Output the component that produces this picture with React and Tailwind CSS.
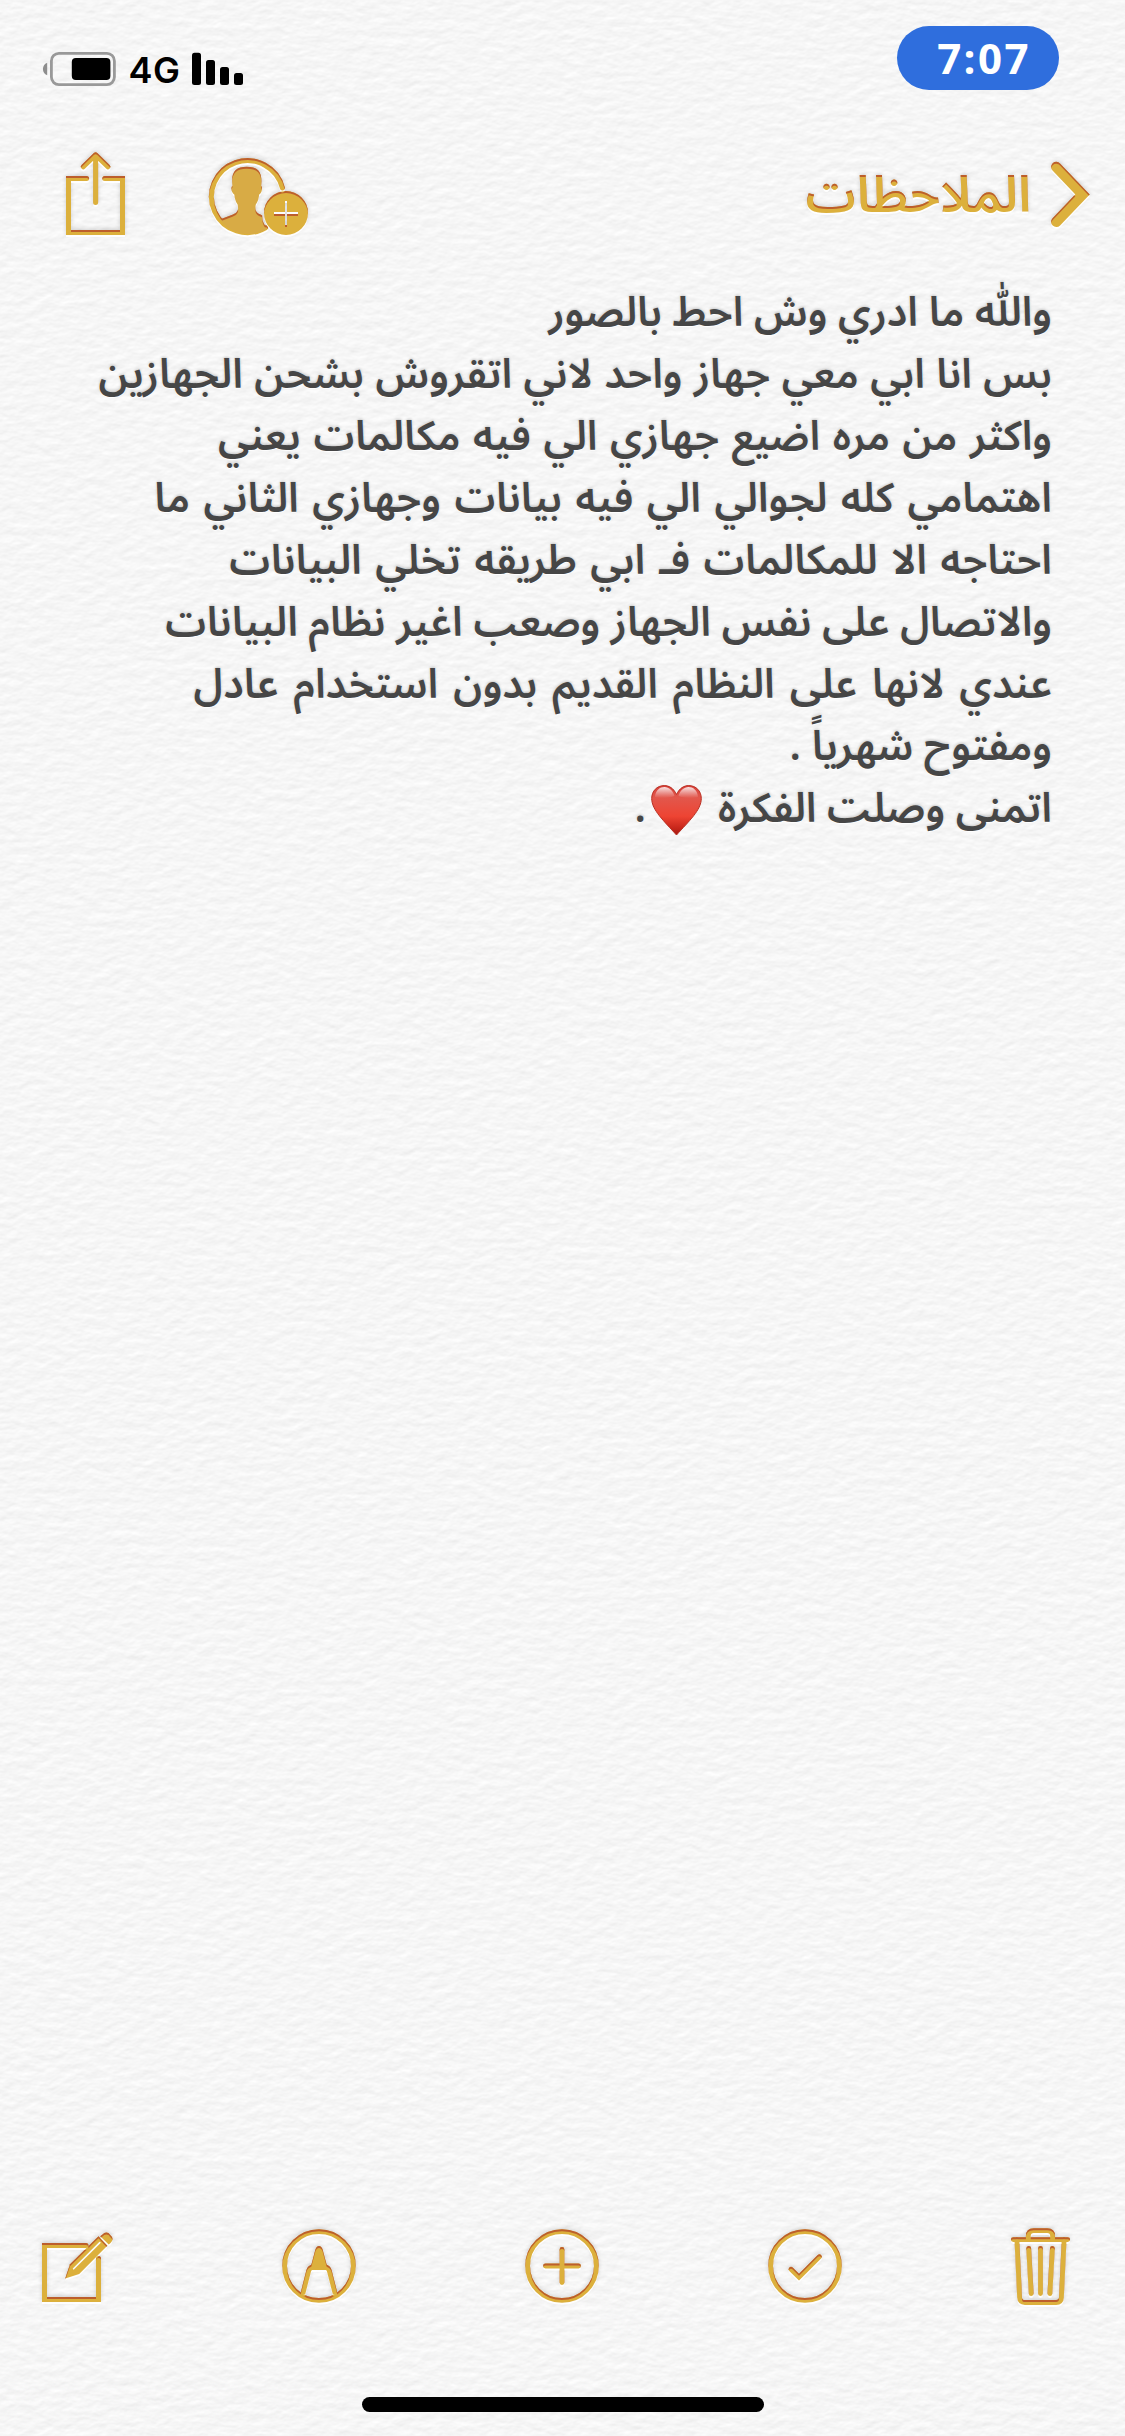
const NOTE_LINES = [
  { text: "واللّٰه ما ادري وش احط بالصور", spacing: "" },
  { text: "بس انا ابي معي جهاز واحد لاني اتقروش بشحن الجهازين", spacing: "[word-spacing:0.8px]" },
  { text: "واكثر من مره اضيع جهازي الي فيه مكالمات يعني", spacing: "[word-spacing:1.9px]" },
  { text: "اهتمامي كله لجوالي الي فيه بيانات وجهازي الثاني ما", spacing: "[word-spacing:2.9px]" },
  { text: "احتاجه الا للمكالمات فـ ابي طريقه تخلي البيانات", spacing: "[word-spacing:2.9px]" },
  { text: "والاتصال على نفس الجهاز وصعب اغير نظام البيانات", spacing: "[word-spacing:0.1px]" },
  { text: "عندي لانها على النظام القديم بدون استخدام عادل", spacing: "[word-spacing:4.3px]" },
  { text: "ومفتوح شهرياً .", spacing: "" },
];

function Filters() {
  return (
    <svg className="absolute h-0 w-0" aria-hidden="true">
      <defs>
        <filter id="emboss" x="-10%" y="-10%" width="120%" height="120%" colorInterpolationFilters="sRGB">
          <feOffset in="SourceAlpha" dy="1.6" result="down" />
          <feComposite in="SourceAlpha" in2="down" operator="out" result="edge" />
          <feFlood floodColor="#b9562a" floodOpacity="0.9" />
          <feComposite in2="edge" operator="in" result="inner" />
          <feGaussianBlur in="SourceAlpha" stdDeviation="2" result="soft" />
          <feOffset in="soft" dy="-1" result="softUp" />
          <feFlood floodColor="#000" floodOpacity="0.16" />
          <feComposite in2="softUp" operator="in" result="shade" />
          <feFlood floodColor="#fff" floodOpacity="0.9" />
          <feComposite in2="down" operator="in" result="light" />
          <feMerge>
            <feMergeNode in="shade" />
            <feMergeNode in="light" />
            <feMergeNode in="SourceGraphic" />
            <feMergeNode in="inner" />
          </feMerge>
        </filter>
      </defs>
    </svg>
  );
}

function Paper() {
  return (
    <svg className="absolute inset-0 h-full w-full" aria-hidden="true">
      <filter id="paper" x="0" y="0" width="100%" height="100%" colorInterpolationFilters="sRGB">
        <feTurbulence type="fractalNoise" baseFrequency="0.07 0.12" numOctaves="3" seed="8" />
        <feDiffuseLighting surfaceScale="0.22" diffuseConstant="1.11" lightingColor="#fbfbfb">
          <feDistantLight azimuth="75" elevation="62" />
        </feDiffuseLighting>
      </filter>
      <rect width="100%" height="100%" filter="url(#paper)" />
    </svg>
  );
}

function StatusBar() {
  return (
    <div dir="ltr" className="flex h-[116px] items-start justify-between pr-[66px] pl-[42px]">
      <div className="flex h-[137px] items-center">
        <svg width="76" height="36" viewBox="42 51 76 36" aria-label="Battery">
          <path d="M47.2 62.7C41.5 65 41.5 73 47.2 75.3Z" fill="#8e8e8e" />
          <rect x="51.4" y="53.4" width="63" height="31.2" rx="7.5" fill="none" stroke="#999" strokeWidth="2.8" />
          <rect x="71.8" y="58" width="38.6" height="22" rx="4" fill="#000" />
        </svg>
        <span className="ml-[10.5px] pt-0.5 font-['Inter'] text-[36px] leading-none font-semibold tracking-[0.4px] text-black">4G</span>
        <svg className="ml-[12px]" width="52" height="36" viewBox="192 51 52 36" aria-label="Signal">
          <rect x="192" y="52.7" width="9" height="32.3" rx="2.5" />
          <rect x="206" y="60" width="9" height="25" rx="2.5" />
          <rect x="220" y="67" width="9" height="18" rx="2.5" />
          <rect x="234" y="73" width="9" height="12" rx="2.5" />
        </svg>
      </div>
      <div className="mt-[26px] flex h-16 w-[162px] items-center justify-center rounded-full bg-[#2f6edd] pl-[12px] font-['Open_Sans'] text-[42px] leading-none font-bold tracking-[2.4px] text-white">
        7:07
      </div>
    </div>
  );
}

const GOLD = "#dcb03c";

function ShareIcon() {
  return (
    <svg className="[filter:url(#emboss)]" width="70" height="92" viewBox="61 148 70 92" fill="none" stroke={GOLD} strokeWidth="5" strokeLinecap="round" strokeLinejoin="round" aria-label="Share">
      <path d="M86.6 178.6H68.5V232.5H122.5V178.6H104.8" strokeLinejoin="miter" />
      <path d="M95.6 202.5V156.5M83.3 166.8L95.6 154.9L107.9 166.8" />
    </svg>
  );
}

function AddPersonIcon() {
  return (
    <svg className="[filter:url(#emboss)]" width="108" height="92" viewBox="205 148 108 92" aria-label="Add people">
      <path d="M282.4 188A36 36 0 1 0 265.5 227.8" fill="none" stroke={GOLD} strokeWidth="5" strokeLinecap="round" />
      <path d="M220.5 219.3L233 214.6C238.5 212.2 238.6 209 237.6 204.5C235.5 201.5 234.7 198 234.3 194.5C231.4 192.8 230.7 187.5 232.4 185.8C230.8 172 235.5 166.8 246.7 166.8C258 166.8 262.7 172 261.2 185.8C262.8 187.5 262 192.8 259.2 194.5C258.8 198 258 201.5 255.8 204.5C254.9 209 255 212.2 260.5 214.6L262.2 215.4C262 221 264 225 267.4 228.4C255 237.5 231 236.5 220.5 219.3Z" fill="#d8ab45" />
      <path fillRule="evenodd" clipRule="evenodd" d="M286 191A22 22 0 1 1 286 235A22 22 0 1 1 286 191ZM285 201V212H274V214H285V225H287V214H298V212H287V201Z" fill={GOLD} />
    </svg>
  );
}

function BackChevron() {
  return (
    <svg className="[filter:url(#emboss)]" width="46" height="72" viewBox="1048 160 46 72" fill="none" stroke={GOLD} strokeWidth="10.4" strokeLinecap="round" strokeLinejoin="miter" aria-label="Back">
      <path d="M1056.3 168L1082.5 195.4L1056.3 222.8" />
    </svg>
  );
}

function Toolbar() {
  const cls = "[filter:url(#emboss)]";
  return (
    <div dir="ltr" className="flex h-[84px] items-center justify-between pr-[51px] pl-[38px]">
      <svg className={cls} width="80" height="84" viewBox="38 2224 80 84" fill="none" stroke={GOLD} strokeWidth="5" strokeLinecap="round" strokeLinejoin="miter" aria-label="Compose">
        <path d="M86 2245.5H44.5V2299.5H98.5V2258.5" />
        <path d="M65.2 2278.4L70 2264.3L98.5 2236.3L107.3 2245.8L79.2 2273.9Z" fill={GOLD} stroke="none" />
        <path d="M102.5 2234.5Q105 2231.5 108.5 2233L112 2237Q113.5 2240 110.5 2243L108.7 2244.5L100.2 2236.2Z" fill={GOLD} stroke="none" />
        <path d="M73.6 2268.8L99.8 2242.6" stroke="#fafafa" strokeWidth="1.6" />
      </svg>
      <svg className={cls} width="84" height="84" viewBox="277 2224 84 84" fill="none" stroke={GOLD} strokeWidth="4.8" aria-label="Markup">
        <circle cx="319" cy="2266" r="34.4" />
        <path d="M302.8 2294L308.8 2270.5Q309.6 2268 312.5 2266.8M335.2 2294L329.2 2270.5Q328.4 2268 325.5 2266.8" />
        <path d="M311 2270V2266L315.4 2249.5Q316.5 2246 319 2246Q321.5 2246 322.6 2249.5L327 2266V2270Z" fill={GOLD} stroke="none" />
      </svg>
      <svg className={cls} width="84" height="84" viewBox="520 2224 84 84" fill="none" stroke={GOLD} strokeWidth="4.8" strokeLinecap="round" aria-label="Add">
        <circle cx="562" cy="2266" r="34.4" />
        <path d="M545.5 2266H578.5M562 2249.5V2282.5" />
      </svg>
      <svg className={cls} width="84" height="84" viewBox="763 2224 84 84" fill="none" stroke={GOLD} strokeWidth="4.8" strokeLinecap="round" aria-label="Checklist">
        <circle cx="805" cy="2266" r="34.4" />
        <path d="M791 2269.2L799 2277.2L819.4 2256.8" />
      </svg>
      <svg className={cls} width="68" height="84" viewBox="1006 2224 68 84" fill="none" stroke={GOLD} strokeWidth="4.8" strokeLinecap="round" aria-label="Delete">
        <path d="M1013.3 2239.6H1067.7M1028.3 2239V2236Q1028.3 2230.6 1033.7 2230.6H1047.2Q1052.6 2230.6 1052.6 2236V2239" />
        <path d="M1016.9 2240L1019.6 2297.5Q1019.9 2302.5 1024.9 2302.5H1056.1Q1061.1 2302.5 1061.4 2297.5L1064.1 2240" />
        <path d="M1028.7 2248.5L1031.2 2293.5M1040.5 2248.5V2293.5M1052.4 2248.5L1049.9 2293.5" />
      </svg>
    </div>
  );
}

function Heart() {
  return (
    <svg width="51" height="51" viewBox="0 0 51 51" className="mt-[7px] mr-[16px]" role="img" aria-label="❤️">
      <defs>
        <linearGradient id="heartFill" x1="0" y1="0" x2="0" y2="1">
          <stop offset="0" stopColor="#d8413a" />
          <stop offset="0.25" stopColor="#e2574c" />
          <stop offset="0.62" stopColor="#ee4433" />
          <stop offset="0.85" stopColor="#c9281c" />
          <stop offset="1" stopColor="#a51a12" />
        </linearGradient>
        <linearGradient id="heartShine" x1="0" y1="0" x2="0" y2="1">
          <stop offset="0" stopColor="#fff" stopOpacity="0.85" />
          <stop offset="1" stopColor="#fff" stopOpacity="0" />
        </linearGradient>
      </defs>
      <path d="M25.5 9.5C22.5 3 18 .6 13.2.6C6 .6.7 6 .7 13.5C.7 25 13 36 25.5 50C38 36 50.3 25 50.3 13.5C50.3 6 45 .6 37.8.6C33 .6 28.5 3 25.5 9.5Z" fill="url(#heartFill)" stroke="#b92f22" strokeWidth="1" />
      <path d="M4 12C4.5 5 9 2 13.5 2C18 2 22 5.5 23.5 11C17 13.5 9 13.5 4 12ZM47 12C46.5 5 42 2 37.5 2C33 2 29 5.5 27.5 11C34 13.5 42 13.5 47 12Z" fill="url(#heartShine)" />
    </svg>
  );
}

export default function App() {
  return (
    <main dir="rtl" lang="ar" className="relative isolate h-[2436px] w-[1125px] overflow-hidden bg-[#f7f7f7]">
      <Filters />
      <Paper />
      <div className="relative flex h-full flex-col">
        <StatusBar />
        <header className="flex h-[157px] items-center justify-between pr-[31px] pl-[61px]">
          <div className="flex items-center">
            <BackChevron />
            <h1 className="mr-[17px] pt-0.5 font-['Noto_Sans_Arabic',sans-serif] text-[50.4px] leading-[80px] font-semibold whitespace-nowrap text-[#dcb03c] [filter:url(#emboss)]">الملاحظات</h1>
          </div>
          <div className="flex items-center gap-[74px] pb-0.5">
            <AddPersonIcon />
            <ShareIcon />
          </div>
        </header>
        <article className="mt-[9px] pr-[73px] font-['Noto_Sans_Arabic','Noto_Sans',sans-serif] text-[41px] leading-[62px] font-semibold whitespace-nowrap text-[#464646] [text-shadow:0_1px_1px_#fff,0_-1px_3px_rgba(0,0,0,0.2)]">
          {NOTE_LINES.map((line) => (
            <p key={line.text} className={line.spacing}>{line.text}</p>
          ))}
          <p className="flex h-[62px]">
            <span>اتمنى وصلت الفكرة</span>
            <Heart />
            <span className="mr-[5px]">.</span>
          </p>
        </article>
        <div className="grow" />
        <Toolbar />
        <div className="flex h-[128px] items-start justify-center pt-[89px]">
          <div className="h-[15px] w-[402px] rounded-full bg-black" />
        </div>
      </div>
    </main>
  );
}
